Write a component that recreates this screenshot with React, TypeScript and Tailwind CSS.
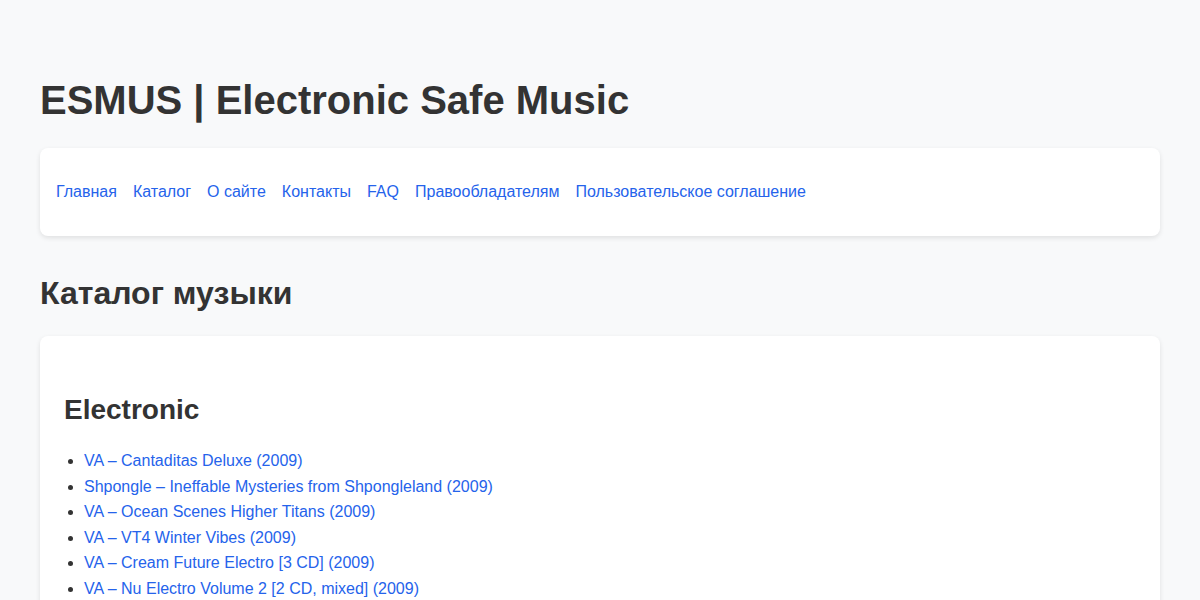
const navLinks = [
  "Главная",
  "Каталог",
  "О сайте",
  "Контакты",
  "FAQ",
  "Правообладателям",
  "Пользовательское соглашение",
];

const releases = [
  "VA – Cantaditas Deluxe (2009)",
  "Shpongle – Ineffable Mysteries from Shpongleland (2009)",
  "VA – Ocean Scenes Higher Titans (2009)",
  "VA – VT4 Winter Vibes (2009)",
  "VA – Cream Future Electro [3 CD] (2009)",
  "VA – Nu Electro Volume 2 [2 CD, mixed] (2009)",
];

export default function App() {
  return (
    <div
      className="min-h-screen bg-[#f8f9fa] px-10 pt-[76px] text-[#333]"
      style={{ fontFamily: '"Liberation Sans", Arial, sans-serif' }}
    >
      <h1 className="text-[40px] leading-[48px] font-bold">ESMUS | Electronic Safe Music</h1>

      <nav className="mt-6 rounded-lg bg-white px-4 py-[31px] shadow-[0_2px_5px_rgba(0,0,0,0.1)]">
        <ul className="flex gap-4 text-base leading-[26px]">
          {navLinks.map((label) => (
            <li key={label}>
              <a href="#" className="text-[#2563eb]">
                {label}
              </a>
            </li>
          ))}
        </ul>
      </nav>

      <h2 className="mt-[37px] text-[32px] leading-10 font-bold">Каталог музыки</h2>

      <section className="mt-[23px] rounded-t-lg bg-white px-6 pt-[57px] pb-6 shadow-[0_2px_5px_rgba(0,0,0,0.1)]">
        <h3 className="text-[28px] leading-[34px] font-bold">Electronic</h3>
        <ul className="mt-[21px] list-disc pl-5 text-base leading-[25.6px]">
          {releases.map((title) => (
            <li key={title}>
              <a href="#" className="text-[#2563eb]">
                {title}
              </a>
            </li>
          ))}
        </ul>
      </section>
    </div>
  );
}
